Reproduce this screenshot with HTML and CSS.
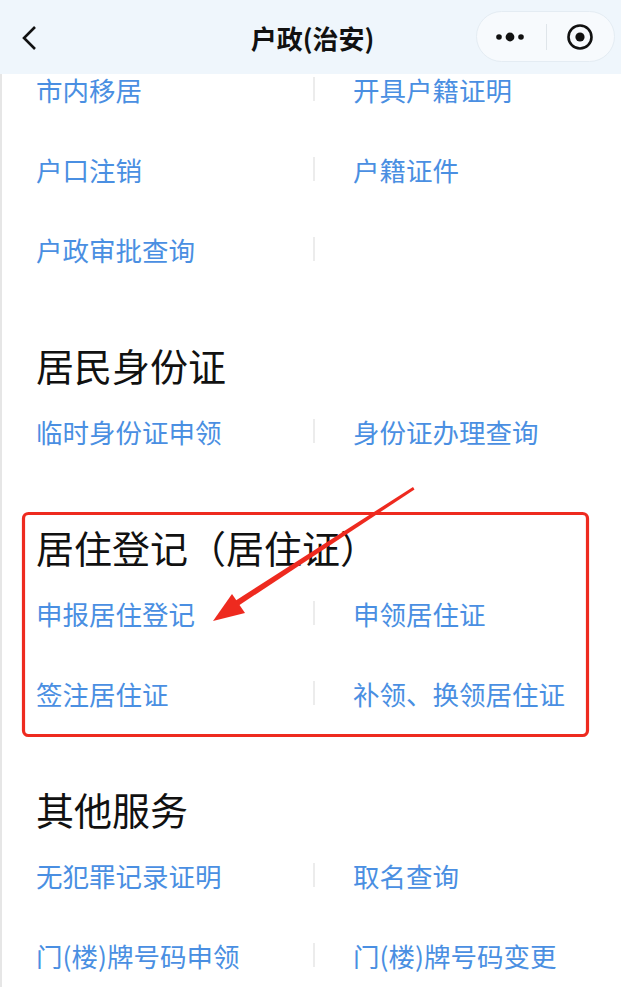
FILE: index.html
```html
<!DOCTYPE html>
<html lang="zh-CN">

<head>
    <meta charset="UTF-8">
    <meta name="viewport" content="width=device-width, initial-scale=1.0">
    <title>户政(治安)</title>
    <link rel="stylesheet" href="styles.css">
</head>

<body>
    <header class="navbar">
        <svg class="back" width="24" height="32" viewBox="0 0 24 32">
            <polyline points="16,5 5,16 16,27" fill="none" stroke="#111" stroke-width="2.6" stroke-linejoin="miter" />
        </svg>
        <h1 class="title">户政(治安)</h1>
        <div class="capsule">
            <svg class="more" width="40" height="20" viewBox="0 0 40 20">
                <circle cx="9" cy="10" r="2.8" fill="#111" />
                <circle cx="20" cy="10" r="4.4" fill="#111" />
                <circle cx="31" cy="10" r="2.8" fill="#111" />
            </svg>
            <span class="capsule-sep"></span>
            <svg class="close" width="32" height="32" viewBox="0 0 32 32">
                <circle cx="16" cy="16" r="11.5" fill="none" stroke="#111" stroke-width="2.6" />
                <circle cx="16" cy="16" r="4.6" fill="#111" />
            </svg>
        </div>
    </header>

    <main class="page">
        <section class="group">
            <div class="row">
                <a class="cell">市内移居</a><span class="sep"></span><a class="cell right">开具户籍证明</a>
            </div>
            <div class="row">
                <a class="cell">户口注销</a><span class="sep"></span><a class="cell right">户籍证件</a>
            </div>
            <div class="row">
                <a class="cell">户政审批查询</a><span class="sep"></span><a class="cell right"></a>
            </div>
        </section>

        <section class="group">
            <h2 class="group-title">居民身份证</h2>
            <div class="row">
                <a class="cell">临时身份证申领</a><span class="sep"></span><a class="cell right">身份证办理查询</a>
            </div>
        </section>

        <section class="group">
            <h2 class="group-title">居住登记（居住证）</h2>
            <div class="row">
                <a class="cell">申报居住登记</a><span class="sep"></span><a class="cell right">申领居住证</a>
            </div>
            <div class="row">
                <a class="cell">签注居住证</a><span class="sep"></span><a class="cell right">补领、换领居住证</a>
            </div>
        </section>

        <section class="group">
            <h2 class="group-title">其他服务</h2>
            <div class="row">
                <a class="cell">无犯罪记录证明</a><span class="sep"></span><a class="cell right">取名查询</a>
            </div>
            <div class="row">
                <a class="cell">门(楼)牌号码申领</a><span class="sep"></span><a class="cell right">门(楼)牌号码变更</a>
            </div>
        </section>
    </main>

    <!-- marcatura rossa sopra lo screenshot -->
    <svg class="markup" width="621" height="987" viewBox="0 0 621 987">
        <rect x="23.5" y="513.5" width="564" height="222" rx="5" fill="none" stroke="#ee2a1f" stroke-width="3.2" />
        <polygon points="413,487 414.5,489.5 238,606 235,601" fill="#ee2a1f" />
        <polygon points="213,621 232,594 245,613" fill="#ee2a1f" />
    </svg>
</body>

</html>
```

FILE: styles.css
```css
body {
    margin: 0;
    background: #fff;
    font-family: "Microsoft YaHei", "Noto Sans CJK SC", "Noto Sans", sans-serif;
}

.navbar {
    position: fixed;
    top: 0;
    left: 0;
    right: 0;
    height: 74px;
    z-index: 2;
    display: flex;
    align-items: center;
    background: #eff6fc;
}

.back {
    margin-left: 19px;
    margin-top: 2px;
}

.title {
    position: absolute;
    left: 0;
    right: 0;
    margin: 0;
    text-align: center;
    font-size: 26px;
    font-weight: bold;
    color: #111;
    pointer-events: none;
    padding-left: 4px;
}

.capsule {
    margin-left: auto;
    margin-right: 6px;
    margin-top: -1px;
    width: 139px;
    height: 51px;
    box-sizing: border-box;
    border-radius: 26px;
    border: 1px solid #e4ecf3;
    background: #f7fafd;
    display: flex;
    align-items: center;
}

.more {
    margin-left: 13px;
}

.capsule-sep {
    width: 1px;
    height: 26px;
    background: #dfe5ea;
    margin-left: 16px;
}

.close {
    margin-left: 17px;
}

.page {
    padding-top: 49px;
    border-left: 2px solid #e6e6e6;
    min-height: 938px;
}

.group-title {
    margin: 0;
    padding: 50px 0 0 34px;
    height: 52px;
    line-height: 52px;
    font-size: 38px;
    font-weight: normal;
    color: #111;
}

.row {
    display: flex;
    align-items: center;
    height: 80px;
}

.cell {
    width: 311px;
    padding-left: 34px;
    box-sizing: border-box;
    font-size: 26.5px;
    color: #4a8fe2;
    white-space: nowrap;
}

.cell.right {
    width: auto;
    padding-left: 38px;
}

.sep {
    width: 2px;
    height: 24px;
    background: #ececec;
}

.markup {
    position: absolute;
    top: 0;
    left: 0;
    z-index: 3;
    pointer-events: none;
}
```
